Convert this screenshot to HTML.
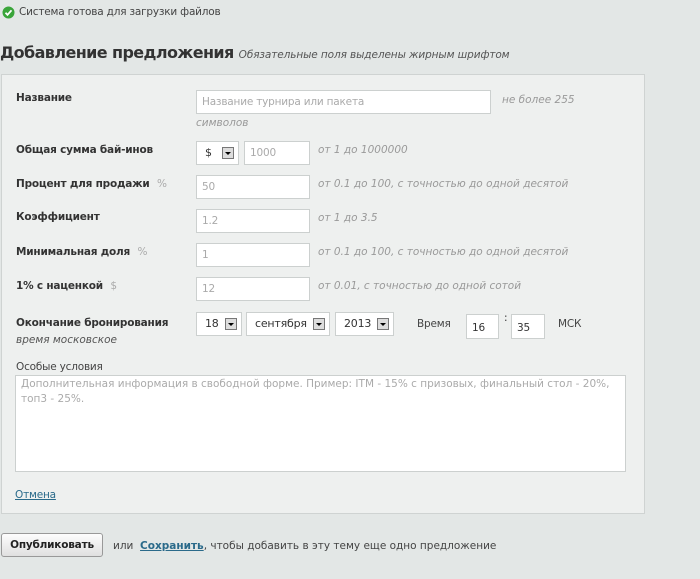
<!DOCTYPE html>
<html><head><meta charset="utf-8"><style>
body{margin:0;width:700px;height:579px;background:#e3e7e6;font-family:"DejaVu Sans","Liberation Sans",sans-serif;font-size:10.5px;letter-spacing:-0.2px;color:#333;position:relative;overflow:hidden}
.a{position:absolute;white-space:nowrap;margin-top:1px}
.panel{position:absolute;left:1px;top:74px;width:642px;height:438px;background:#eef0ef;border:1px solid #cfd3d2}
.lb{font-weight:bold;color:#333}
.inp{position:absolute;background:#fff;border:1px solid #ccd0cf;box-sizing:border-box;color:#aaa;font-size:10.5px;padding-left:5px;line-height:23px}
.sel{position:absolute;background:#fff;border:1px solid #ccd0cf;box-sizing:border-box;color:#333;font-size:11px;line-height:22px;padding-left:8px}
.sel i{position:absolute;right:4px;top:5px;width:12px;height:12px;border:1px solid #777;background:#ddd;box-sizing:border-box}
.sel i:after{content:"";position:absolute;left:2px;top:4px;border-left:3px solid transparent;border-right:3px solid transparent;border-top:3px solid #000}
.h{color:#999;font-style:italic;letter-spacing:0}
.g{color:#aaa}
</style></head><body>
<svg class="a" style="left:2px;top:6px;margin:0" width="13" height="13" viewBox="0 0 13 13"><circle cx="6.5" cy="6.5" r="6" fill="#3aa53a"/><path d="M3.5 6.8l2 2 4-4.5" stroke="#fff" stroke-width="1.8" fill="none"/></svg>
<div class="a" style="left:19px;top:5px;color:#444">Система готова для загрузки файлов</div>
<div class="a" style="left:0;top:42px;font-size:16px;letter-spacing:-0.6px;font-weight:bold;color:#333">Добавление предложения <span style="font-size:10.5px;letter-spacing:-0.1px;font-weight:normal;font-style:italic;color:#555">Обязательные поля выделены жирным шрифтом</span></div>
<div class="panel"></div>
<div class="a lb" style="left:16px;top:91px">Название</div>
<div class="inp" style="left:196px;top:90px;width:295px;height:24px">Название турнира или пакета</div>
<div class="a h" style="left:502px;top:93px">не более 255</div>
<div class="a h" style="left:196px;top:116px">символов</div>
<div class="a lb" style="left:16px;top:143px">Общая сумма бай-инов</div>
<div class="sel" style="left:196px;top:141px;width:43px;height:24px">$<i></i></div>
<div class="inp" style="left:244px;top:141px;width:66px;height:24px">1000</div>
<div class="a h" style="left:318px;top:143px">от 1 до 1000000</div>
<div class="a lb" style="left:16px;top:177px">Процент для продажи <span class="g" style="font-weight:normal;margin-left:4px">%</span></div>
<div class="inp" style="left:196px;top:175px;width:114px;height:24px">50</div>
<div class="a h" style="left:318px;top:177px">от 0.1 до 100, с точностью до одной десятой</div>
<div class="a lb" style="left:16px;top:210px">Коэффициент</div>
<div class="inp" style="left:196px;top:209px;width:114px;height:24px">1.2</div>
<div class="a h" style="left:318px;top:211px">от 1 до 3.5</div>
<div class="a lb" style="left:16px;top:245px">Минимальная доля <span class="g" style="font-weight:normal;margin-left:4px">%</span></div>
<div class="inp" style="left:196px;top:243px;width:114px;height:24px">1</div>
<div class="a h" style="left:318px;top:245px">от 0.1 до 100, с точностью до одной десятой</div>
<div class="a lb" style="left:16px;top:279px">1% с наценкой <span class="g" style="font-weight:normal;margin-left:4px">$</span></div>
<div class="inp" style="left:196px;top:277px;width:114px;height:24px">12</div>
<div class="a h" style="left:318px;top:279px">от 0.01, с точностью до одной сотой</div>
<div class="a lb" style="left:16px;top:316px">Окончание бронирования</div>
<div class="a h" style="left:16px;top:333px;color:#555">время московское</div>
<div class="sel" style="left:196px;top:312px;width:46px;height:24px">18<i></i></div>
<div class="sel" style="left:246px;top:312px;width:84px;height:24px">сентября<i></i></div>
<div class="sel" style="left:335px;top:312px;width:59px;height:24px">2013<i></i></div>
<div class="a" style="left:417px;top:317px;color:#444">Время</div>
<div class="inp" style="left:466px;top:314px;width:33px;height:25px;color:#333;line-height:26px">16</div>
<div class="a" style="left:504px;top:311px;color:#333">:</div>
<div class="inp" style="left:511px;top:314px;width:34px;height:25px;color:#333;line-height:26px">35</div>
<div class="a" style="left:558px;top:317px;color:#444">МСК</div>
<div class="a" style="left:16px;top:360px;color:#444">Особые условия</div>
<div class="inp" style="left:15px;top:375px;width:611px;height:97px;line-height:15px;padding:1px 6px 0 5px;white-space:normal;letter-spacing:0">Дополнительная информация в свободной форме. Пример: ITM - 15% с призовых, финальный стол - 20%, топ3 - 25%.</div>
<div class="a" style="left:15px;top:488px;color:#2a6a8a;text-decoration:underline">Отмена</div>
<div class="a" style="left:1px;top:533px;margin:0;width:102px;height:24px;box-sizing:border-box;border:1px solid #999;border-radius:3px;background:linear-gradient(#fdfdfd,#e0e0e0);font-weight:bold;color:#222;text-align:center;line-height:22px">Опубликовать</div>
<div class="a" style="left:113px;top:539px;color:#444;letter-spacing:0">или &nbsp;<span style="color:#2a6a8a;font-weight:bold;text-decoration:underline">Сохранить</span>, чтобы добавить в эту тему еще одно предложение</div>
</body></html>
